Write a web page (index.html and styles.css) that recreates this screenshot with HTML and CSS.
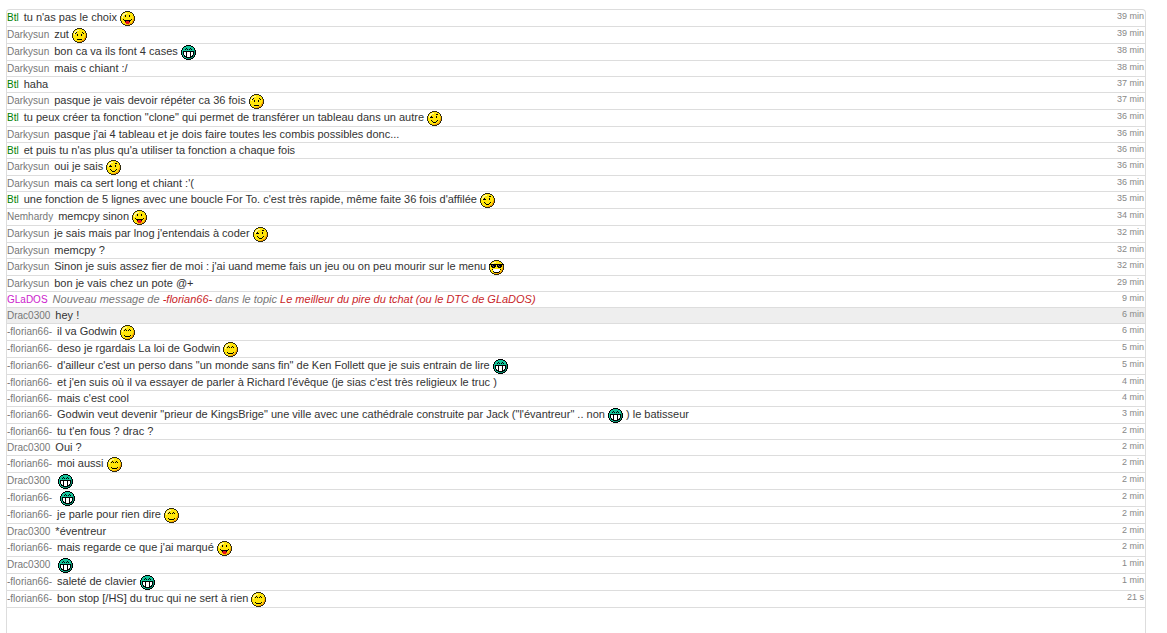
FILE: index.html
```html
<!DOCTYPE html>
<html lang="fr">
<head>
    <meta charset="utf-8">
    <title>Tchat</title>
    <link rel="stylesheet" href="styles.css">
</head>
<body>
    <!-- Smileys, 15x15 -->
    <svg class="sprites" aria-hidden="true">
        <symbol id="face" viewBox="0 0 15 15">
            <path fill="#ffe60a" d="M5 1h5v1h2v1h1v2h1v5h-1v2h-1v1h-2v1h-5v-1h-2v-1h-1v-2h-1v-5h1v-2h1v-1h2z"/>
            <path fill="#fff79a" d="M4 2h3v1h-3zM3 3h2v1h-2zM2 4h2v1h-2zM2 5h1v2h-1z"/>
            <path fill="#ffc400" d="M13 5h1v5h-1v2h-1v1h-2v1h-5v-1h4v-1h2v-1h1v-2h1z"/>
            <path fill="#f39a00" d="M13 8h1v2h-1zM12 10h1v2h-1zM10 12h2v1h-2zM8 13h2v1h-2z"/>
            <path fill="#2e2a10" d="M5 0h5v1h-5zM3 1h2v1h-2zM10 1h2v1h-2zM2 2h1v1h-1zM12 2h1v1h-1zM1 3h1v2h-1zM13 3h1v2h-1zM0 5h1v5h-1zM14 5h1v5h-1zM1 10h1v2h-1zM13 10h1v2h-1zM2 12h1v1h-1zM12 12h1v1h-1zM3 13h2v1h-2zM10 13h2v1h-2zM5 14h5v1h-5z"/>
        </symbol>
        <symbol id="langue" viewBox="0 0 15 15">
            <use href="#face"/>
            <path d="M5 4h1v2h-1zM9 4h1v2h-1zM3 8h1v1h-1zM11 8h1v1h-1zM4 9h7v1h-7zM5 10h1v1h-1zM9 10h1v1h-1z"/>
            <path fill="#e8141c" d="M6 10h3v1h-3zM5 11h5v1h-5zM6 12h3v1h-3z"/>
        </symbol>
        <symbol id="triste" viewBox="0 0 15 15">
            <use href="#face"/>
            <path d="M4 4h1v1h-1zM3 5h1v1h-1zM10 4h1v1h-1zM11 5h1v1h-1zM5 6h1v2h-1zM9 6h1v2h-1zM5 11h5v1h-5z"/>
        </symbol>
        <symbol id="clin" viewBox="0 0 15 15">
            <use href="#face"/>
            <path d="M3 6h3v1h-3zM4 5h1v1h-1zM9 5h1v2h-1zM9 3h2v1h-2zM4 9h1v1h-1zM5 10h1v1h-1zM6 11h3v1h-3zM9 10h1v1h-1zM10 9h1v1h-1z"/>
        </symbol>
        <symbol id="content" viewBox="0 0 15 15">
            <use href="#face"/>
            <path d="M5 4h1v1h-1zM4 5h1v1h-1zM6 5h1v1h-1zM9 4h1v1h-1zM8 5h1v1h-1zM10 5h1v1h-1zM4 10h1v1h-1zM5 11h5v1h-5zM10 10h1v1h-1z"/>
        </symbol>
        <symbol id="cool" viewBox="0 0 15 15">
            <use href="#face"/>
            <path d="M0 4h15v1h-15zM2 5h5v2h-5zM8 5h5v2h-5zM3 7h3v1h-3zM9 7h3v1h-3zM3 9h1v1h-1zM11 9h1v1h-1zM4 11h1v1h-1zM10 11h1v1h-1zM5 12h5v1h-5z"/>
            <path fill="#fff" d="M4 9h7v2h-7zM5 11h5v1h-5z"/>
            <path fill="#666" d="M3 5h1v1h-1zM4 6h1v1h-1zM9 5h1v1h-1zM10 6h1v1h-1z"/>
        </symbol>
        <symbol id="vert" viewBox="0 0 15 15">
            <path fill="#14c49a" d="M5 1h5v1h2v1h1v2h1v5h-1v2h-1v1h-2v1h-5v-1h-2v-1h-1v-2h-1v-5h1v-2h1v-1h2z"/>
            <path fill="#0b8f6f" d="M13 5h1v5h-1v2h-1v1h-2v1h-4v-1h4v-1h1v-2h2z"/>
            <path d="M5 0h5v1h-5zM3 1h2v1h-2zM10 1h2v1h-2zM2 2h1v1h-1zM12 2h1v1h-1zM1 3h1v2h-1zM13 3h1v2h-1zM0 5h1v5h-1zM14 5h1v5h-1zM1 10h1v2h-1zM13 10h1v2h-1zM2 12h1v1h-1zM12 12h1v1h-1zM3 13h2v1h-2zM10 13h2v1h-2zM5 14h5v1h-5z"/>
            <path d="M5 3h1v1h-1zM4 4h1v1h-1zM6 4h1v1h-1zM9 3h1v1h-1zM8 4h1v1h-1zM10 4h1v1h-1zM2 6h11v4h-1v2h-2v1h-5v-1h-2v-2h-1z"/>
            <path fill="#fff" d="M3 7h2v3h-2zM6 7h1v5h-1zM7 7h2v5h-2zM10 7h2v3h-2zM4 10h1v1h-1zM10 10h1v1h-1z"/>
        </symbol>
    </svg>

    <ul class="tchat">
        <li class="message"><span class="pseudo ami">Btl</span><span class="texte">tu n'as pas le choix <svg class="smiley"><use href="#langue"/></svg></span><time class="date">39 min</time></li>
        <li class="message"><span class="pseudo">Darkysun</span><span class="texte">zut <svg class="smiley"><use href="#triste"/></svg></span><time class="date">39 min</time></li>
        <li class="message"><span class="pseudo">Darkysun</span><span class="texte">bon ca va ils font 4 cases <svg class="smiley"><use href="#vert"/></svg></span><time class="date">38 min</time></li>
        <li class="message"><span class="pseudo">Darkysun</span><span class="texte">mais c chiant :/</span><time class="date">38 min</time></li>
        <li class="message"><span class="pseudo ami">Btl</span><span class="texte">haha</span><time class="date">37 min</time></li>
        <li class="message"><span class="pseudo">Darkysun</span><span class="texte">pasque je vais devoir répéter ca 36 fois <svg class="smiley"><use href="#triste"/></svg></span><time class="date">37 min</time></li>
        <li class="message"><span class="pseudo ami">Btl</span><span class="texte">tu peux créer ta fonction "clone" qui permet de transférer un tableau dans un autre <svg class="smiley"><use href="#clin"/></svg></span><time class="date">36 min</time></li>
        <li class="message"><span class="pseudo">Darkysun</span><span class="texte">pasque j'ai 4 tableau et je dois faire toutes les combis possibles donc...</span><time class="date">36 min</time></li>
        <li class="message"><span class="pseudo ami">Btl</span><span class="texte">et puis tu n'as plus qu'a utiliser ta fonction a chaque fois</span><time class="date">36 min</time></li>
        <li class="message"><span class="pseudo">Darkysun</span><span class="texte">oui je sais <svg class="smiley"><use href="#clin"/></svg></span><time class="date">36 min</time></li>
        <li class="message"><span class="pseudo">Darkysun</span><span class="texte">mais ca sert long et chiant :'(</span><time class="date">36 min</time></li>
        <li class="message"><span class="pseudo ami">Btl</span><span class="texte">une fonction de 5 lignes avec une boucle For To. c'est très rapide, même faite 36 fois d'affilée <svg class="smiley"><use href="#clin"/></svg></span><time class="date">35 min</time></li>
        <li class="message"><span class="pseudo">Nemhardy</span><span class="texte">memcpy sinon <svg class="smiley"><use href="#langue"/></svg></span><time class="date">34 min</time></li>
        <li class="message"><span class="pseudo">Darkysun</span><span class="texte">je sais mais par lnog j'entendais à coder <svg class="smiley"><use href="#clin"/></svg></span><time class="date">32 min</time></li>
        <li class="message"><span class="pseudo">Darkysun</span><span class="texte">memcpy ?</span><time class="date">32 min</time></li>
        <li class="message"><span class="pseudo">Darkysun</span><span class="texte">Sinon je suis assez fier de moi : j'ai uand meme fais un jeu ou on peu mourir sur le menu <svg class="smiley"><use href="#cool"/></svg></span><time class="date">32 min</time></li>
        <li class="message"><span class="pseudo">Darkysun</span><span class="texte">bon je vais chez un pote @+</span><time class="date">29 min</time></li>
        <li class="message annonce"><span class="pseudo bot">GLaDOS</span><span class="texte">Nouveau message de <a href="#">-florian66-</a> dans le topic <a href="#">Le meilleur du pire du tchat (ou le DTC de GLaDOS)</a></span><time class="date">9 min</time></li>
        <li class="message actif"><span class="pseudo">Drac0300</span><span class="texte">hey !</span><time class="date">6 min</time></li>
        <li class="message"><span class="pseudo">-florian66-</span><span class="texte">il va Godwin <svg class="smiley"><use href="#content"/></svg></span><time class="date">6 min</time></li>
        <li class="message"><span class="pseudo">-florian66-</span><span class="texte">deso je rgardais La loi de Godwin <svg class="smiley"><use href="#content"/></svg></span><time class="date">5 min</time></li>
        <li class="message"><span class="pseudo">-florian66-</span><span class="texte">d'ailleur c'est un perso dans "un monde sans fin" de Ken Follett que je suis entrain de lire <svg class="smiley"><use href="#vert"/></svg></span><time class="date">5 min</time></li>
        <li class="message"><span class="pseudo">-florian66-</span><span class="texte">et j'en suis où il va essayer de parler à Richard l'évêque (je sias c'est très religieux le truc )</span><time class="date">4 min</time></li>
        <li class="message"><span class="pseudo">-florian66-</span><span class="texte">mais c'est cool</span><time class="date">4 min</time></li>
        <li class="message"><span class="pseudo">-florian66-</span><span class="texte">Godwin veut devenir "prieur de KingsBrige" une ville avec une cathédrale construite par Jack ("l'évantreur" .. non <svg class="smiley"><use href="#vert"/></svg> ) le batisseur</span><time class="date">3 min</time></li>
        <li class="message"><span class="pseudo">-florian66-</span><span class="texte">tu t'en fous ? drac ?</span><time class="date">2 min</time></li>
        <li class="message"><span class="pseudo">Drac0300</span><span class="texte">Oui ?</span><time class="date">2 min</time></li>
        <li class="message"><span class="pseudo">-florian66-</span><span class="texte">moi aussi <svg class="smiley"><use href="#content"/></svg></span><time class="date">2 min</time></li>
        <li class="message"><span class="pseudo">Drac0300</span><span class="texte">&nbsp;<svg class="smiley"><use href="#vert"/></svg></span><time class="date">2 min</time></li>
        <li class="message"><span class="pseudo">-florian66-</span><span class="texte">&nbsp;<svg class="smiley"><use href="#vert"/></svg></span><time class="date">2 min</time></li>
        <li class="message"><span class="pseudo">-florian66-</span><span class="texte">je parle pour rien dire <svg class="smiley"><use href="#content"/></svg></span><time class="date">2 min</time></li>
        <li class="message"><span class="pseudo">Drac0300</span><span class="texte">*éventreur</span><time class="date">2 min</time></li>
        <li class="message"><span class="pseudo">-florian66-</span><span class="texte">mais regarde ce que j'ai marqué <svg class="smiley"><use href="#langue"/></svg></span><time class="date">2 min</time></li>
        <li class="message"><span class="pseudo">Drac0300</span><span class="texte">&nbsp;<svg class="smiley"><use href="#vert"/></svg></span><time class="date">1 min</time></li>
        <li class="message"><span class="pseudo">-florian66-</span><span class="texte">saleté de clavier <svg class="smiley"><use href="#vert"/></svg></span><time class="date">1 min</time></li>
        <li class="message"><span class="pseudo">-florian66-</span><span class="texte">bon stop [/HS] du truc qui ne sert à rien <svg class="smiley"><use href="#content"/></svg></span><time class="date">21 s</time></li>
    </ul>
</body>
</html>
```
FILE: styles.css
```css
* {
    box-sizing: border-box;
}
body {
    margin: 0;
    padding: 9px 21px 0 6px;
    background: #fff;
    color: #333;
    font-family: Arial, "Liberation Sans", sans-serif;
    font-size: 11px;
    line-height: 15px;
}
.sprites {
    display: none;
}
.tchat {
    list-style: none;
    margin: 0;
    padding: 0;
    min-height: calc(100vh - 9px);
    border: 1px solid #ddd;
    border-bottom: none;
    border-radius: 4px 4px 0 0;
}
.message {
    display: flex;
    align-items: flex-start;
    border-bottom: 1px solid #ddd;
}
.pseudo {
    margin-right: 5px;
    color: #777;
    font-size: 10px;
}
.ami {
    color: #008000;
}
.bot {
    color: #cc22cc;
}
.texte {
    flex: 1;
}
.annonce .texte {
    color: #777;
    font-style: italic;
}
.annonce a {
    color: #c81e28;
    text-decoration: none;
}
.actif {
    background: #eee;
}
.date {
    padding-right: 1px;
    color: #888;
    font-size: 9px;
    line-height: 13px;
}
.smiley {
    width: 15px;
    height: 15px;
    vertical-align: -5px;
    shape-rendering: crispEdges;
}
```
